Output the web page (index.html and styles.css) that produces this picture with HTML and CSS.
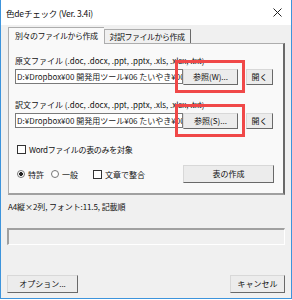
FILE: index.html
```html
<!DOCTYPE html>
<html lang="ja">
<head>
    <meta charset="utf-8">
    <link rel="stylesheet" href="styles.css">
</head>
<body>
    <div class="ventana">
        <div class="titulo">
            <span>色deチェック (Ver. 3.4i)</span>
            <svg class="cerrar" width="9" height="9" viewBox="0 0 9 9">
                <path d="M0.5 0.5 L8.5 8.5 M8.5 0.5 L0.5 8.5" stroke="#222" stroke-width="1" fill="none"/>
            </svg>
        </div>
        <div class="cuerpo">
            <div class="tabs">
                <div class="tab activo">別々のファイルから作成</div>
                <div class="tab">対訳ファイルから作成</div>
            </div>
            <div class="panel">
                <div class="etiqueta">原文ファイル (.doc, .docx, .ppt, .pptx, .xls, .xlsx, .txt)</div>
                <div class="fila">
                    <div class="caja">D:¥Dropbox¥00 開発用ツール¥06 たいやき¥00 下</div>
                    <div class="boton ref">参照(W)...<span class="marca"></span></div>
                    <div class="boton abrir">開く</div>
                </div>
                <div class="etiqueta segunda">訳文ファイル (.doc, .docx, .ppt, .pptx, .xls, .xlsx, .txt)</div>
                <div class="fila">
                    <div class="caja">D:¥Dropbox¥00 開発用ツール¥06 たいやき¥00 下</div>
                    <div class="boton ref">参照(S)...<span class="marca"></span></div>
                    <div class="boton abrir">開く</div>
                </div>
                <div class="check-fila">
                    <span class="check"></span>Wordファイルの表のみを対象
                </div>
                <div class="opciones">
                    <span class="radio on"></span>特許
                    <span class="radio"></span>一般
                    <span class="check"></span>文章で整合
                    <div class="boton crear">表の作成</div>
                </div>
            </div>
            <div class="estado">A4縦×2列, フォント:11.5, 記載順</div>
            <div class="progreso"></div>
            <div class="pie">
                <div class="boton opc">オプション...</div>
                <div class="boton cancel">キャンセル</div>
            </div>
        </div>
    </div>
</body>
</html>
```

FILE: styles.css
```css
body{
    margin: 0;
    padding: 0;
    font-family: "Noto Sans CJK JP", "Noto Sans", sans-serif;
    font-size: 8px;
    color: #111;
}
.ventana{
    width: 292px;
    height: 299px;
    border: 1px solid #3d94dc;
    border-top: none;
    box-sizing: border-box;
    background-color: #f0f0f0;
    display: flex;
    flex-direction: column;
}
.titulo{
    height: 25px;
    flex: none;
    background-color: #fff;
    display: flex;
    align-items: center;
    justify-content: space-between;
    padding: 0 9px 0 5px;
    font-size: 8.5px;
    letter-spacing: -0.2px;
}
.cuerpo{
    padding: 0 6px 0 7px;
    flex: 1;
    display: flex;
    flex-direction: column;
}
.tabs{
    display: flex;
    align-items: flex-end;
    height: 18px;
    letter-spacing: -0.5px;
}
.tab{
    height: 13px;
    line-height: 13px;
    padding: 0 5px;
    border: 1px solid #adadad;
    border-right-color: #696969;
    border-bottom: none;
    background-color: #f0f0f0;
}
.tab.activo{
    height: 16px;
    line-height: 15px;
    padding: 0 6px;
    background-color: #f9f9f9;
    border-right: none;
    position: relative;
    z-index: 1;
    margin-bottom: -1px;
}
.panel{
    height: 152px;
    border: 1px solid #adadad;
    border-right: 2px solid #696969;
    border-bottom: 2px solid #a0a0a0;
    background-color: #f9f9f9;
    padding: 11px 9px 0 6px;
    box-sizing: border-box;
}
.etiqueta{
    height: 11px;
    line-height: 11px;
    white-space: nowrap;
    overflow: hidden;
}
.etiqueta.segunda{
    margin-top: 14px;
}
.fila{
    display: flex;
    height: 16px;
    margin-top: 3px;
}
.caja{
    width: 168px;
    height: 15px;
    line-height: 13px;
    border: 1px solid #7a7a7a;
    background-color: #fff;
    white-space: nowrap;
    overflow: hidden;
    padding-left: 1px;
    box-sizing: border-box;
    color: #222;
}
.boton{
    border: 1px solid #d8d8d8;
    border-right-color: #696969;
    border-bottom-color: #696969;
    background-color: #ececec;
    text-align: center;
    box-sizing: border-box;
    white-space: nowrap;
}
.ref{
    width: 55px;
    height: 16px;
    line-height: 14px;
    position: relative;
}
.marca{
    position: absolute;
    top: -10px;
    bottom: -9px;
    left: -9px;
    right: -8px;
    border: 3px solid #f04848;
}
.abrir{
    width: 27px;
    height: 16px;
    line-height: 14px;
    margin-left: 8px;
}
.check-fila{
    display: flex;
    align-items: center;
    margin-top: 14px;
    height: 12px;
    padding-left: 2px;
    letter-spacing: -0.3px;
}
.check{
    width: 9px;
    height: 9px;
    border: 1px solid #333;
    background-color: #fff;
    margin-right: 3px;
    box-sizing: border-box;
}
.opciones{
    display: flex;
    align-items: center;
    margin-top: 10px;
    height: 18px;
    padding-left: 2px;
}
.radio{
    width: 8px;
    height: 8px;
    border: 1px solid #777;
    border-radius: 50%;
    background-color: #fff;
    margin-right: 3px;
    box-sizing: border-box;
}
.radio.on{
    background: radial-gradient(circle, #222 1.6px, #fff 2.2px);
}
.opciones .radio + .radio{
    margin-left: 7px;
}
.opciones .check{
    margin-left: 15px;
}
.crear{
    width: 91px;
    height: 18px;
    line-height: 16px;
    margin-left: auto;
}
.estado{
    margin-top: 6px;
    height: 12px;
    line-height: 12px;
    letter-spacing: -0.1px;
}
.progreso{
    margin-top: 15px;
    margin-left: -1px;
    height: 17px;
    border: 1px solid #fff;
    border-top: 2px solid #a0a0a0;
    border-left: 2px solid #a0a0a0;
    box-sizing: border-box;
}
.pie{
    display: flex;
    justify-content: space-between;
    margin: auto 0 5px -1px;
}
.opc{
    width: 71px;
    height: 18px;
    line-height: 16px;
}
.cancel{
    width: 55px;
    height: 18px;
    line-height: 16px;
}
```
